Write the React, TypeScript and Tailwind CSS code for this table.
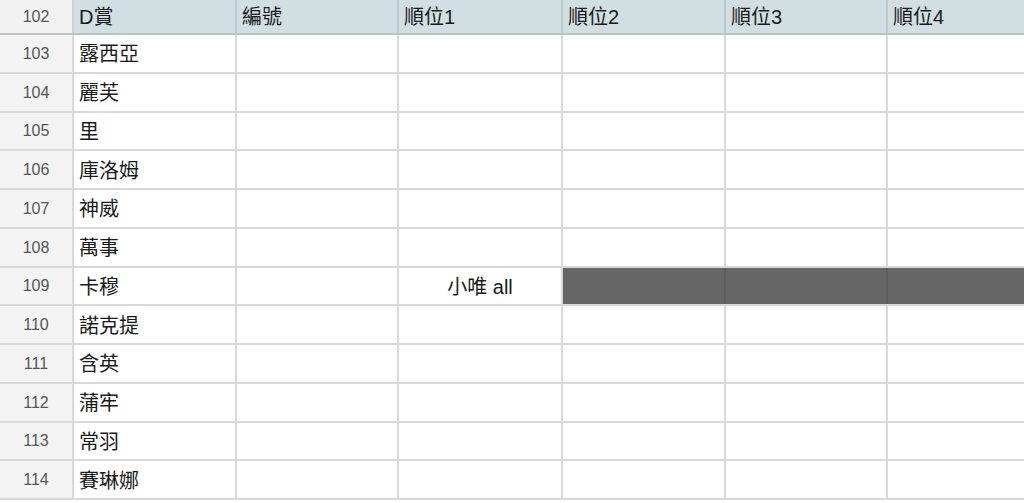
import React from 'react';

const rows: { n: number; name: string; rank1?: string; dark?: boolean }[] = [
  { n: 103, name: '露西亞' },
  { n: 104, name: '麗芙' },
  { n: 105, name: '里' },
  { n: 106, name: '庫洛姆' },
  { n: 107, name: '神威' },
  { n: 108, name: '萬事' },
  { n: 109, name: '卡穆', rank1: '小唯 all', dark: true },
  { n: 110, name: '諾克提' },
  { n: 111, name: '含英' },
  { n: 112, name: '蒲牢' },
  { n: 113, name: '常羽' },
  { n: 114, name: '賽琳娜' },
];

const headers = ['D賞', '編號', '順位1', '順位2', '順位3', '順位4'];
const widths = ['w-[163px]', 'w-[162px]', 'w-[164px]', 'w-[163px]', 'w-[162px]', 'w-[163px]'];

const font = { fontFamily: '"Liberation Sans", "Noto Sans CJK TC", sans-serif' };

export default function App() {
  return (
    <div className="w-[1024px] h-[503px] overflow-hidden bg-white text-[#1a1a1a]" style={font}>
      {/* header row */}
      <div className="flex h-[35px] border-b-2 border-[#b7c4c8]">
        <div className="w-[74px] shrink-0 bg-[#f2f2f2] border-r-2 border-[#c9d3d6] flex items-center justify-center text-[16px] text-[#555]">
          102
        </div>
        {headers.map((h, i) => (
          <div
            key={h}
            className={`${widths[i]} shrink-0 bg-[#d1dfe3] border-r-2 border-[#bccacf] flex items-center px-[5px] text-[20px]`}
          >
            {h}
          </div>
        ))}
      </div>

      {rows.map(r => (
        <div key={r.n} className="flex h-[38.75px]">
          <div className="w-[74px] shrink-0 bg-[#f3f3f3] border-r-2 border-b-2 border-[#d9d9d9] flex items-center justify-center pt-[1px] text-[16px] text-[#555]">
            {r.n}
          </div>
          <div className="w-[163px] shrink-0 border-r-2 border-b-2 border-[#d9d9d9] flex items-center px-[5px] pt-[2px] text-[20px]">
            {r.name}
          </div>
          <div className="w-[162px] shrink-0 border-r-2 border-b-2 border-[#d9d9d9]" />
          <div className="w-[164px] shrink-0 border-r-2 border-b-2 border-[#d9d9d9] flex items-center justify-center pt-[2px] text-[20px]">
            {r.rank1}
          </div>
          {r.dark ? (
            <div className="flex-1 flex bg-[#666] border-b-2 border-[#d9d9d9]">
              <div className="w-[163px] shrink-0 border-r-2 border-[#5e5e5e]" />
              <div className="w-[162px] shrink-0 border-r-2 border-[#5e5e5e]" />
              <div className="flex-1" />
            </div>
          ) : (
            <>
              <div className="w-[163px] shrink-0 border-r-2 border-b-2 border-[#d9d9d9]" />
              <div className="w-[162px] shrink-0 border-r-2 border-b-2 border-[#d9d9d9]" />
              <div className="flex-1 border-b-2 border-[#d9d9d9]" />
            </>
          )}
        </div>
      ))}
    </div>
  );
}
